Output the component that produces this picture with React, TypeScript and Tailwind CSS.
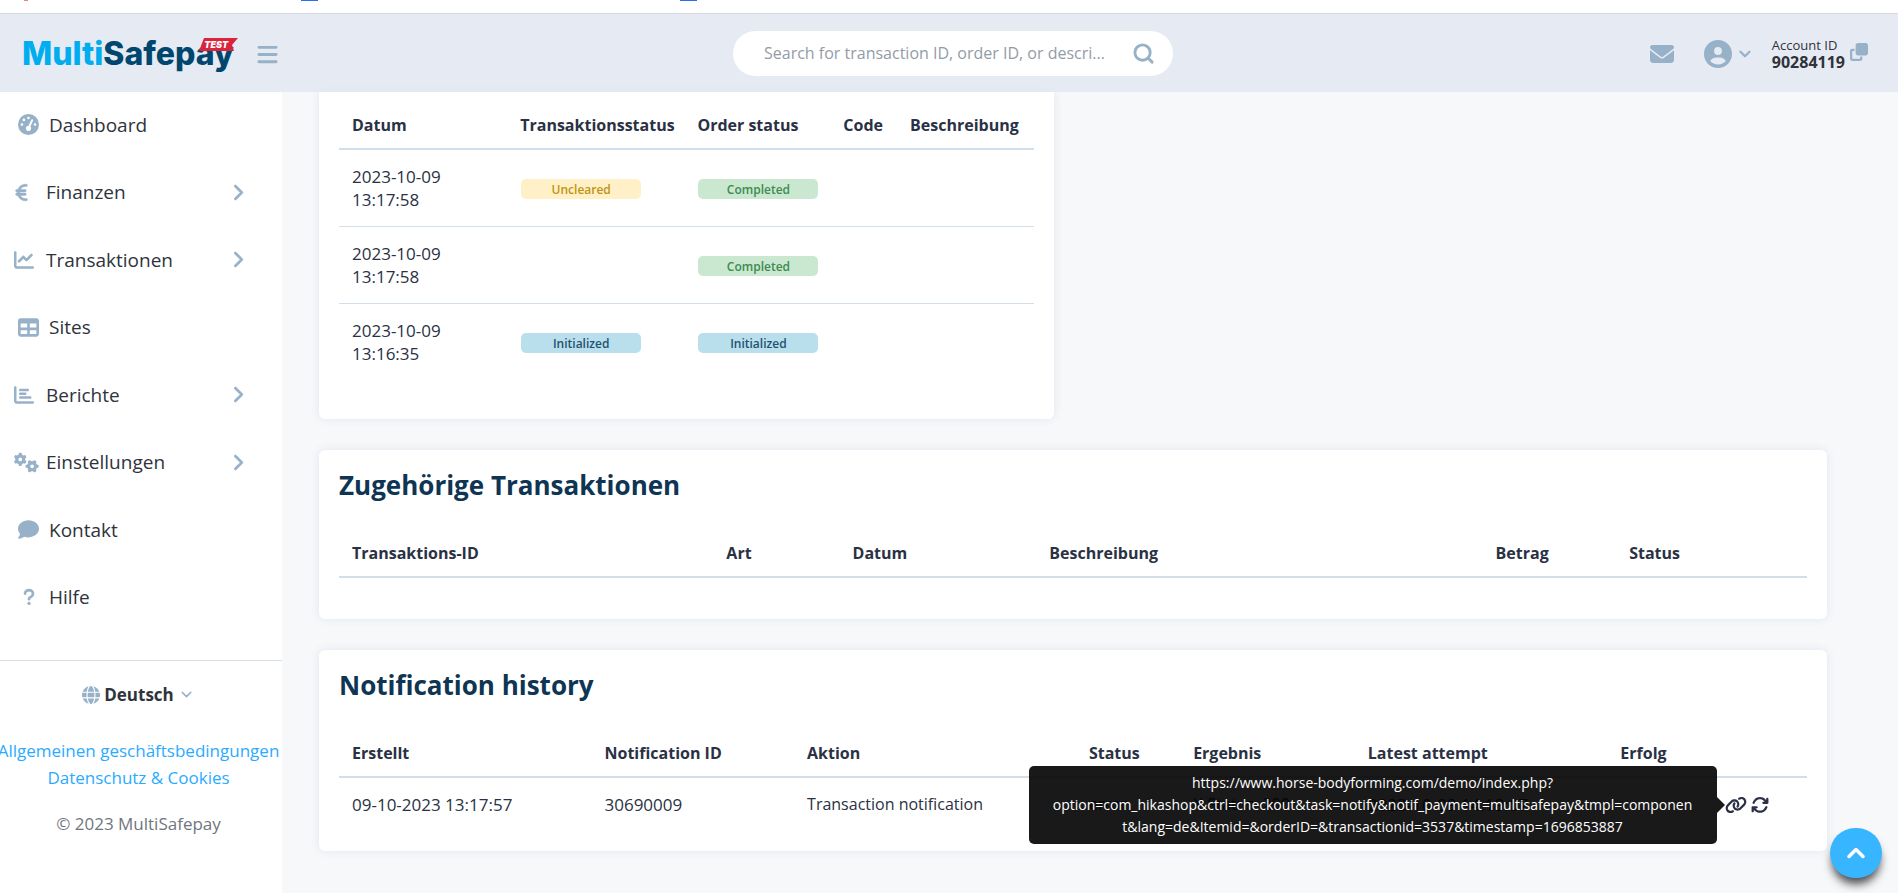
import React from "react";
import {
  FaArrowsRotate,
  FaBars,
  FaChartBar,
  FaChartLine,
  FaChevronRight,
  FaCircleUser,
  FaClone,
  FaComment,
  FaEnvelope,
  FaEuroSign,
  FaGaugeHigh,
  FaGears,
  FaGlobe,
  FaLink,
  FaQuestion,
  FaTable,
} from "react-icons/fa6";
import { ChevronDown, ChevronUp, Search } from "lucide-react";

interface MenuItem {
  title: string;
  icon: React.ReactNode;
  nested?: boolean;
}

interface Column {
  title: string;
  width: string;
}

const menu: MenuItem[] = [
  { title: "Dashboard", icon: <FaGaugeHigh size={21} /> },
  {
    title: "Finanzen",
    icon: <FaEuroSign size={19} strokeWidth={12} className="-ml-[2px]" />,
    nested: true,
  },
  { title: "Transaktionen", icon: <FaChartLine size={20} />, nested: true },
  { title: "Sites", icon: <FaTable size={21} /> },
  { title: "Berichte", icon: <FaChartBar size={20} />, nested: true },
  { title: "Einstellungen", icon: <FaGears size={25} />, nested: true },
  { title: "Kontakt", icon: <FaComment size={21} /> },
  { title: "Hilfe", icon: <FaQuestion size={18} strokeWidth={12} /> },
];

const statusColumns: Column[] = [
  { title: "Datum", width: "w-[24.2%]" },
  { title: "Transaktionsstatus", width: "w-[25.5%]" },
  { title: "Order status", width: "w-[21%]" },
  { title: "Code", width: "w-[9.6%]" },
  { title: "Beschreibung", width: "w-[19.7%]" },
];

const relatedColumns: Column[] = [
  { title: "Transaktions-ID", width: "w-[25.5%]" },
  { title: "Art", width: "w-[8.6%]" },
  { title: "Datum", width: "w-[13.4%]" },
  { title: "Beschreibung", width: "w-[30.4%]" },
  { title: "Betrag", width: "w-[9.1%]" },
  { title: "Status", width: "w-[13%]" },
];

const historyColumns: Column[] = [
  { title: "Erstellt", width: "w-[17.2%]" },
  { title: "Notification ID", width: "w-[13.8%]" },
  { title: "Aktion", width: "w-[19.2%]" },
  { title: "Status", width: "w-[7.1%]" },
  { title: "Ergebnis", width: "w-[11.9%]" },
  { title: "Latest attempt", width: "w-[17.2%]" },
  { title: "Erfolg", width: "w-[7.1%]" },
  { title: "", width: "w-[6.5%]" },
];

const statusRows = [
  { date: "2023-10-09", time: "13:17:58", status: "Uncleared", order: "Completed" },
  { date: "2023-10-09", time: "13:17:58", status: "", order: "Completed" },
  { date: "2023-10-09", time: "13:16:35", status: "Initialized", order: "Initialized" },
];

const badgeColors: Record<string, string> = {
  Uncleared: "bg-[#fff0c7] text-[#c29310]",
  Completed: "bg-[#c9e8cf] text-[#3f8a50]",
  Initialized: "bg-[#b9deec] text-[#1f5372]",
};

const Badge = ({ label }: { label: string }) => (
  <span
    className={`block w-[120px] h-5 rounded-[5px] text-center text-[12px] leading-[22px] font-semibold ${badgeColors[label]}`}
  >
    {label}
  </span>
);

const TableHead = ({ columns }: { columns: Column[] }) => (
  <thead>
    <tr className="h-[51px] border-b-2 border-[#d3dfe8]">
      {columns.map(({ title, width }) => (
        <th key={title} className={`${width} pt-1 pl-[13px] text-left font-bold whitespace-nowrap`}>
          {title}
        </th>
      ))}
    </tr>
  </thead>
);

const Logo = () => (
  <a
    href="#"
    className="relative font-['Inter'] text-[32px] leading-10 font-extrabold text-[#00476f]"
  >
    <span className="text-[#00adef]">Multi</span>Safepay
    <span className="absolute top-1 -right-1 flex h-[14px] w-[39px] items-center justify-center">
      <svg className="absolute inset-0" width="39" height="14" viewBox="0 0 39 14">
        <path d="M5 0h34l-6 7 2 6H0z" fill="#d9243c" />
      </svg>
      <span className="relative pr-1 text-[9px] leading-3 font-black italic text-white">TEST</span>
    </span>
  </a>
);

const Header = () => (
  <header className="grid h-[79px] grid-cols-[1fr_440px_1fr] items-center border-t border-[#d6dadf] bg-[#e6ebf3] pr-[14px] pl-[22px] text-[#97b1c8]">
    <div className="flex items-center gap-[22px] pt-[2px]">
      <Logo />
      <button aria-label="Menu">
        <FaBars size={23} />
      </button>
    </div>

    <label className="flex h-[45px] items-center rounded-full bg-white pr-[18px] pl-[31px]">
      <input
        type="search"
        aria-label="Search"
        placeholder="Search for transaction ID, order ID, or descri..."
        className="min-w-0 flex-1 text-[16px] outline-none placeholder:text-[#939ca6]"
      />
      <Search size={23} strokeWidth={3} />
    </label>

    <div className="flex items-center justify-end pt-[2px] pr-4">
      <button aria-label="Messages" className="mr-[30px]">
        <FaEnvelope size={24} />
      </button>
      <button aria-label="Profile" className="mr-[18px] flex items-center gap-1">
        <FaCircleUser size={28} />
        <ChevronDown size={18} strokeWidth={3} />
      </button>
      <div className="mr-[5px] text-[#2f333b]">
        <div className="text-[13px] leading-[17px]">Account ID</div>
        <div className="text-[16px] leading-[17px] font-bold">90284119</div>
      </div>
      <button aria-label="Copy account ID" className="mb-1">
        <FaClone size={18} />
      </button>
    </div>
  </header>
);

const Sidebar = () => (
  <aside className="w-[282px] shrink-0 bg-white">
    <nav className="flex h-[540px] flex-col text-[19px] text-[#2f333b]">
      {menu.map(({ title, icon, nested }) => (
        <a
          key={title}
          href="#"
          className={`flex flex-1 items-center pr-[36px] pb-[2px] ${nested ? "pl-[14px]" : "pl-[18px]"}`}
        >
          <span
            className={`flex text-[#97b1c8] ${nested ? "w-8 justify-start" : "w-[21px] mr-[10px] justify-center"}`}
          >
            {icon}
          </span>
          {title}
          {nested && (
            <FaChevronRight size={17} strokeWidth={24} className="ml-auto text-[#97b1c8]" />
          )}
        </a>
      ))}
    </nav>

    <div className="mt-7 border-t border-[#dcdfe4] pt-5 pr-[5px] text-center text-[17px] leading-[27px]">
      <button className="inline-flex items-center gap-1 font-bold text-[#2f333b]">
        <FaGlobe size={18} className="text-[#97b1c8]" />
        Deutsch
        <ChevronDown size={17} strokeWidth={2} className="text-[#97b1c8]" />
      </button>
      <div className="mt-[26px] flex flex-col items-center whitespace-nowrap text-[#2aabff]">
        <a href="#">Allgemeinen geschäftsbedingungen</a>
        <a href="#">Datenschutz &amp; Cookies</a>
      </div>
      <p className="mt-[19px] text-[#70767d]">© 2023 MultiSafepay</p>
    </div>
  </aside>
);

const UrlTooltip = () => (
  <div
    role="tooltip"
    className="absolute top-1/2 right-full mr-2 w-[688px] -translate-y-1/2 rounded-[5px] bg-black/90 py-[6px] text-center text-[14px] leading-[22px] text-white"
  >
    <div>https://www.horse-bodyforming.com/demo/index.php?</div>
    <div>
      option=com_hikashop&amp;ctrl=checkout&amp;task=notify&amp;notif_payment=multisafepay&amp;tmpl=componen
    </div>
    <div>t&amp;lang=de&amp;Itemid=&amp;orderID=&amp;transactionid=3537&amp;timestamp=1696853887</div>
    <span className="absolute top-1/2 left-full -translate-y-1/2 border-y-8 border-l-8 border-y-transparent border-l-black/90" />
  </div>
);

const App = () => {
  return (
    <div className="flex min-h-screen flex-col bg-[#f7f8fa] font-['Open_Sans','Noto_Sans',sans-serif]">
      <div className="flex h-[13px] items-start bg-white">
        <span className="ml-6 h-px w-1 bg-[#f0807c]" />
        <span className="ml-[273px] h-px w-[17px] bg-[#2a6fee]" />
        <span className="ml-[362px] h-px w-[17px] bg-[#2a6fee]" />
      </div>
      <Header />

      <div className="flex flex-1">
        <Sidebar />

        <main className="flex min-w-0 flex-1 flex-col gap-[31px] pr-[71px] pb-[42px] pl-[37px] text-[16px] leading-[23px] text-[#2a3144]">
          <div className="grid grid-cols-2 gap-[38px]">
            <section className="rounded-b-[6px] bg-white px-5 pt-[6px] pb-[39px] shadow-[0_0_10px_#dfe6ee]">
              <table className="w-full table-fixed">
                <TableHead columns={statusColumns} />
                <tbody>
                  {statusRows.map(({ date, time, status, order }, index) => (
                    <tr key={index} className="h-[77px] border-b border-[#d3dfe8] last:border-b-0">
                      <td className="pl-[13px] text-[17px]">
                        {date}
                        <br />
                        {time}
                      </td>
                      <td className="pt-[2px] pl-[14px]">{status && <Badge label={status} />}</td>
                      <td className="pt-[2px] pl-[14px]">{order && <Badge label={order} />}</td>
                      <td />
                      <td />
                    </tr>
                  ))}
                </tbody>
              </table>
            </section>
          </div>

          <section className="rounded-[6px] bg-white px-5 pt-[15px] pb-[41px] shadow-[0_0_10px_#dfe6ee]">
            <h2 className="mb-[21px] text-[26px] leading-10 font-bold text-[#0f3554]">
              Zugehörige Transaktionen
            </h2>
            <table className="w-full table-fixed">
              <TableHead columns={relatedColumns} />
            </table>
          </section>

          <section className="rounded-[6px] bg-white px-5 pt-[15px] pb-5 shadow-[0_0_10px_#dfe6ee]">
            <h2 className="mb-[21px] text-[26px] leading-10 font-bold text-[#0f3554]">
              Notification history
            </h2>
            <table className="w-full table-fixed">
              <TableHead columns={historyColumns} />
              <tbody>
                <tr className="h-[54px] whitespace-nowrap">
                  <td className="pl-[13px] text-[17px]">09-10-2023 13:17:57</td>
                  <td className="pl-[13px] text-[17px]">30690009</td>
                  <td className="pl-[13px]">Transaction notification</td>
                  <td className="pl-[13px]">error</td>
                  <td className="pl-[13px]">X-Status: 200</td>
                  <td className="pl-[13px] text-[17px]">2023-10-09 14:19:07</td>
                  <td />
                  <td className="pl-[13px]">
                    <div className="flex items-center gap-1">
                      <div className="relative">
                        <button aria-label="URL" className="block">
                          <FaLink size={22} />
                        </button>
                        <UrlTooltip />
                      </div>
                      <button aria-label="Retry">
                        <FaArrowsRotate size={18} />
                      </button>
                    </div>
                  </td>
                </tr>
              </tbody>
            </table>
          </section>
        </main>
      </div>

      <button
        aria-label="Back to top"
        className="fixed right-4 bottom-[15px] flex h-[50px] w-[52px] items-center justify-center rounded-full bg-[#37b5ff] text-white shadow-[0_8px_10px_-2px_rgba(0,0,0,0.7)]"
      >
        <ChevronUp size={28} strokeWidth={3} />
      </button>
    </div>
  );
};

export default App;
